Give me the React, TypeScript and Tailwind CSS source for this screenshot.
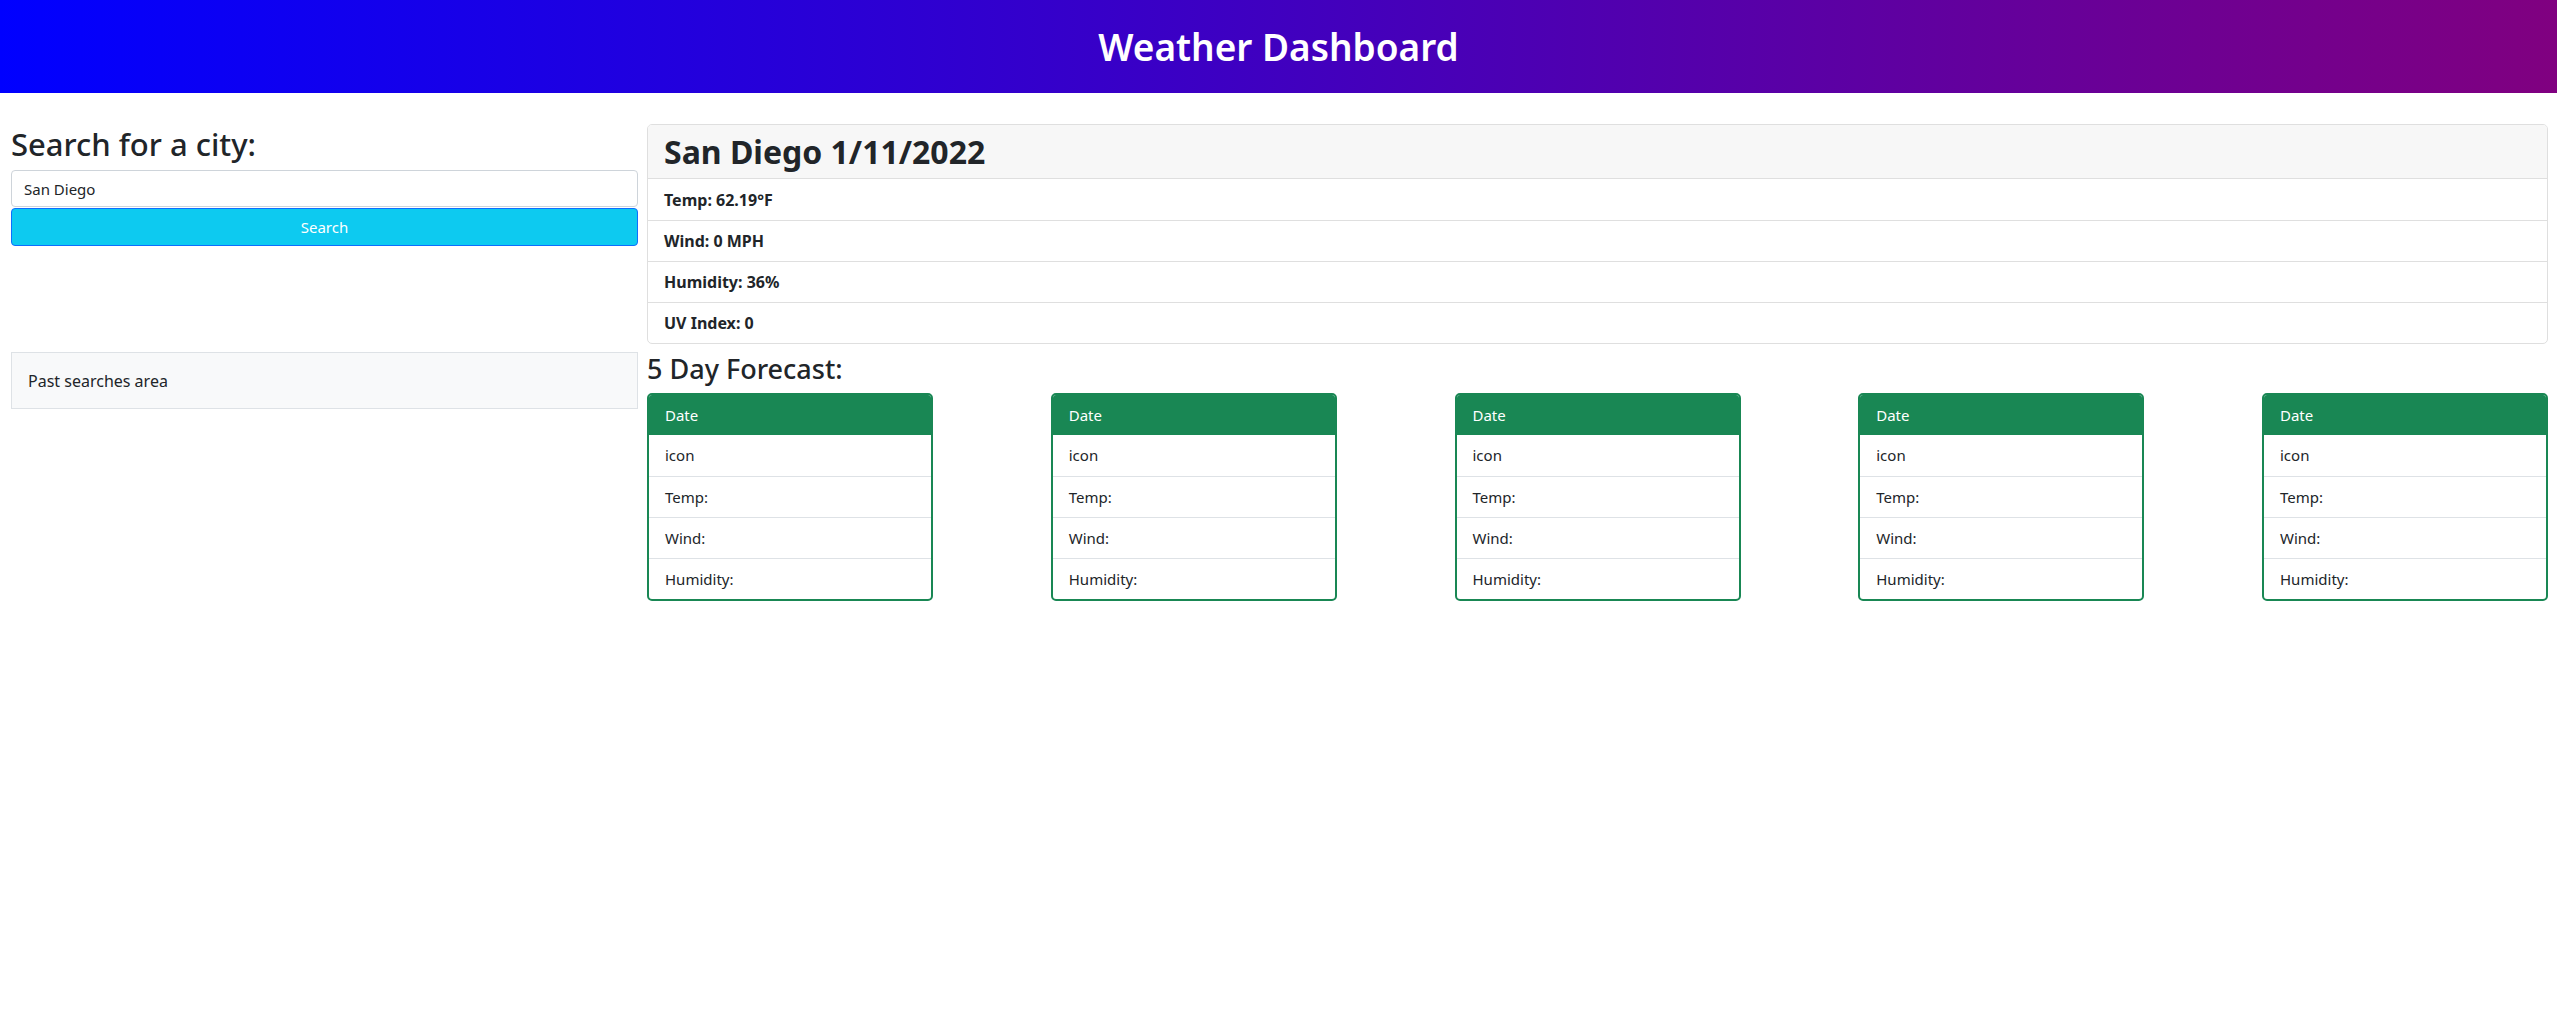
import React from "react";

const FONT = { fontFamily: '"Noto Sans", "Open Sans", Arial, sans-serif' };

type Stat = { label: string; value: string };

const today: Stat[] = [
  { label: "Temp", value: "62.19°F" },
  { label: "Wind", value: "0 MPH" },
  { label: "Humidity", value: "36%" },
  { label: "UV Index", value: "0" },
];

const forecastRows = ["icon", "Temp:", "Wind:", "Humidity:"];

function ForecastCard() {
  return (
    <div className="w-[286px] overflow-hidden rounded-[5px] border-2 border-[#198754] bg-white">
      <div className="flex h-[40px] items-center bg-[#198754] px-4 text-[15px] text-white">Date</div>
      {forecastRows.map((r, i) => (
        <div
          key={r}
          className={
            "flex h-[41px] items-center px-4 text-[15px] text-[#212529] " +
            (i === 0 ? "" : "border-t border-[#dee2e6]")
          }
        >
          {r}
        </div>
      ))}
    </div>
  );
}

export default function App() {
  return (
    <div className="min-h-screen bg-white text-[#212529]" style={FONT}>
      {/* header */}
      <header className="flex h-[93px] items-center justify-center bg-[linear-gradient(to_right,#0000ff,#800080)]">
        <h1 className="text-[37px] font-semibold leading-none text-white">Weather Dashboard</h1>
      </header>

      <main className="flex gap-[9px] pl-[11px] pr-[9px] pt-[31px]">
        {/* left column */}
        <aside className="w-[627px] shrink-0">
          <h2 className="h-[46px] text-[31px] font-medium leading-[40px]">Search for a city:</h2>
          <input
            readOnly
            value="San Diego"
            className="block h-[37px] w-full rounded-[4px] border border-[#ced4da] px-3 text-[15px] text-[#212529] outline-none"
          />
          <button className="mt-px block h-[38px] w-full rounded-[4px] border border-[#0d6efd] bg-[#0dcaf0] text-[15px] text-white">
            Search
          </button>
          <div className="mt-[106px] flex h-[57px] items-center border border-[#dee2e6] bg-[#f8f9fa] px-[16px] text-[16px]">
            Past searches area
          </div>
        </aside>

        {/* right column */}
        <section className="flex-1">
          <div className="overflow-hidden rounded-[5px] border border-[#dfdfdf]">
            <div className="flex h-[54px] items-center border-b border-[#dfdfdf] bg-[#f7f7f7] px-4">
              <h2 className="text-[32px] font-bold leading-none">San Diego 1/11/2022</h2>
            </div>
            {today.map((s, i) => (
              <div
                key={s.label}
                className={
                  "flex h-[41px] items-center px-4 text-[16px] font-bold " +
                  (i === 0 ? "" : "border-t border-[#dfdfdf]")
                }
              >
                {s.label}: {s.value}
              </div>
            ))}
          </div>

          <h3 className="mt-[6px] h-[43px] text-[27px] font-medium leading-[38px]">5 Day Forecast:</h3>

          <div className="flex justify-between">
            {[0, 1, 2, 3, 4].map((i) => (
              <ForecastCard key={i} />
            ))}
          </div>
        </section>
      </main>
    </div>
  );
}
